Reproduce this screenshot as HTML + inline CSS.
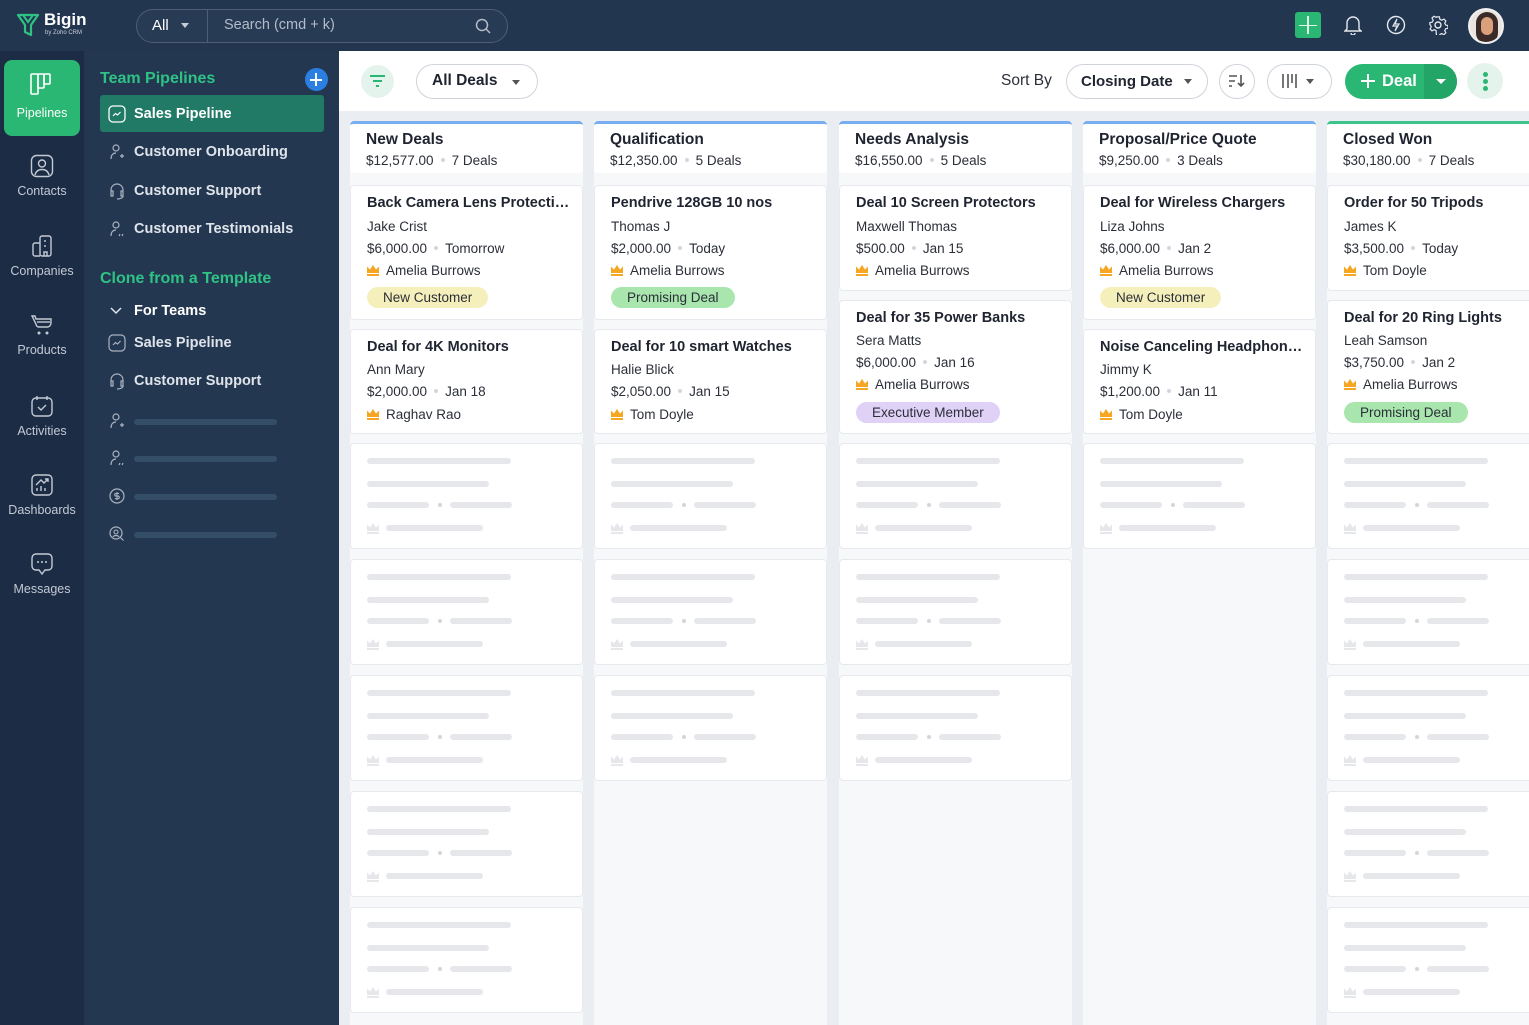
<!DOCTYPE html>
<html><head><meta charset="utf-8">
<style>
*{margin:0;padding:0;box-sizing:border-box}
body{width:1529px;height:1025px;overflow:hidden;font-family:"Liberation Sans",sans-serif;background:#eaedf1;position:relative}
.a{position:absolute}
.top{left:0;top:0;width:1529px;height:51px;background:#233650}
.rail{left:0;top:51px;width:84px;height:974px;background:#1c2c45}
.panel{left:84px;top:51px;width:255px;height:974px;background:#243751}
.ri{position:absolute;left:0;width:84px;text-align:center;color:#c3cad4;font-size:12.5px}
.ri svg{display:block;margin:0 auto 6px}
.pi{position:absolute;left:108px;color:#dfe4ea;font-size:14.5px;font-weight:bold;line-height:18px;white-space:nowrap}
.pi svg{position:absolute;left:0;top:0}
.pi span{position:absolute;left:26px;top:0}
.psk{position:absolute;left:134px;width:143px;height:6px;border-radius:3px;background:#344e68}
.tb{left:339px;top:51px;width:1190px;height:60px;background:#fff}
.pill{position:absolute;border:1px solid #cfd4db;border-radius:18px;background:#fff}
.col{position:absolute;top:121px;width:233px;height:904px;background:#f7f8fa}
.hdr{position:absolute;left:0;top:0;width:233px;height:52px;background:#fff;border-top:3px solid #78aef0;border-radius:4px}
.hdr b{position:absolute;left:16px;top:7px;font-size:15.5px;color:#1f2430}
.hdr i{position:absolute;left:16px;top:29px;font-style:normal;font-size:13.5px;color:#2b2f38;white-space:nowrap}
.dot{display:inline-block;width:4px;height:4px;border-radius:2px;background:#d3d7dd;margin:0 7px 3px}
.card{position:absolute;left:0;width:233px;background:#fff;border:1px solid #e6e9ed;border-radius:4px}
.card .t{position:absolute;left:16px;top:8px;width:205px;font-size:14.5px;font-weight:bold;color:#1f2430;white-space:nowrap;overflow:hidden;text-overflow:ellipsis;line-height:18px}
.card .l{position:absolute;left:16px;font-size:13.5px;color:#2b2f38;white-space:nowrap;line-height:18px}
.card .l svg{vertical-align:-1px;margin-right:7px}
.tag{position:absolute;left:16px;top:101px;height:21px;border-radius:11px;font-size:13.5px;line-height:21px;padding:0 16px;color:#2b2f38;white-space:nowrap}
.skc{position:absolute;width:233px;height:106px;background:#fff;border:1px solid #e6e9ed;border-radius:4px}
.skc .b1{position:absolute;left:16px;top:14px;width:144px;height:6px;border-radius:3px;background:#e5e7ea}
.skc .b2{position:absolute;left:16px;top:37px;width:122px;height:6px;border-radius:3px;background:#e5e7ea}
.skc .b3{position:absolute;left:16px;top:58px;width:62px;height:6px;border-radius:3px;background:#e5e7ea}
.skc .d{position:absolute;left:87px;top:59px;width:4px;height:4px;border-radius:2px;background:#d3d6da}
.skc .b4{position:absolute;left:99px;top:58px;width:62px;height:6px;border-radius:3px;background:#e5e7ea}
.skc .cr{position:absolute;left:16px;top:79px}
.skc .b5{position:absolute;left:35px;top:81px;width:97px;height:6px;border-radius:3px;background:#e5e7ea}
</style></head><body>

<div class="a top"></div>
<svg class="a" style="left:16px;top:12px" width="24" height="26" viewBox="0 0 24 26"><path d="M2 3h20l-7 10v10l-6-3v-7z" fill="none" stroke="#2ec384" stroke-width="2.2" stroke-linejoin="round"/><path d="M7 3l5 7 5-7" fill="none" stroke="#2ec384" stroke-width="2"/></svg>
<div class="a" style="left:44px;top:10px;color:#fff;font-weight:bold;font-size:17px">Bigin</div>
<div class="a" style="left:45px;top:30px;color:#c8ced8;font-size:6px">by Zoho CRM</div>
<div class="a" style="left:136px;top:9px;width:372px;height:34px;border:1px solid #4d5e75;border-radius:17px;background:#283b55"></div>
<div class="a" style="left:152px;top:17px;color:#fff;font-size:15px">All</div>
<div class="a" style="left:181px;top:23px;border-left:4px solid transparent;border-right:4px solid transparent;border-top:5px solid #c7cdd6"></div>
<div class="a" style="left:207px;top:10px;width:1px;height:32px;background:#4d5e75"></div>
<div class="a" style="left:224px;top:17px;color:#b3bcc8;font-size:14.5px">Search (cmd + k)</div>
<svg class="a" style="left:475px;top:18px" width="16" height="16" viewBox="0 0 16 16"><circle cx="7" cy="7" r="5.5" fill="none" stroke="#b3bcc8" stroke-width="1.5"/><path d="M11 11l4 4" stroke="#b3bcc8" stroke-width="1.5"/></svg>
<div class="a" style="left:1295px;top:12px;width:26px;height:26px;border-radius:3px;background:#2ab673"></div>
<div class="a" style="left:1307px;top:16px;width:1.5px;height:18px;background:#dff5ea"></div>
<div class="a" style="left:1299px;top:24.5px;width:18px;height:1.5px;background:#dff5ea"></div>
<svg class="a" style="left:1344px;top:15px" width="18" height="20" viewBox="0 0 18 20"><path d="M3 14V8a6 6 0 0 1 12 0v6l2 2H1z" fill="none" stroke="#e5e9ee" stroke-width="1.4"/><path d="M7 18a2 2 0 0 0 4 0" fill="none" stroke="#e5e9ee" stroke-width="1.4"/></svg>
<svg class="a" style="left:1386px;top:15px" width="20" height="20" viewBox="0 0 20 20"><circle cx="10" cy="10" r="8.5" fill="none" stroke="#e5e9ee" stroke-width="1.4"/><path d="M11 4l-4 7h4l-2 5 4-7H9z" fill="none" stroke="#e5e9ee" stroke-width="1.2"/></svg>
<svg class="a" style="left:1428px;top:15px" width="20" height="20" viewBox="0 0 20 20"><circle cx="10" cy="10" r="3" fill="none" stroke="#e5e9ee" stroke-width="1.4"/><path d="M8.5 1.5h3l.5 2.5 2 1 2.3-1.2 2 2-1.2 2.3 1 2 2.4.4v3l-2.4.5-1 2 1.2 2.2-2 2-2.3-1.2-2 1-.5 2.5h-3L8 16l-2-1-2.3 1.2-2-2L2.9 12 2 10l-.5-.5v-2L4 7l1-2L3.7 2.8l2-2L8 2z" fill="none" stroke="#e5e9ee" stroke-width="1.3" transform="scale(.95) translate(.5 .5)"/></svg>
<div class="a" style="left:1468px;top:8px;width:36px;height:36px;border-radius:18px;background:#e9e4df;border:2px solid #f0f0f0;overflow:hidden"><div style="position:absolute;left:6px;top:2px;width:22px;height:32px;border-radius:11px;background:#3a2b28"></div><div style="position:absolute;left:11px;top:7px;width:12px;height:18px;border-radius:6px;background:#d9a07b"></div></div>

<div class="a rail"></div>
<div class="a" style="left:4px;top:60px;width:76px;height:76px;border-radius:8px;background:#2ab673"></div>
<svg class="a" style="left:29px;top:72px" width="24" height="26" viewBox="0 0 24 26"><rect x="2" y="2" width="7" height="20" rx="1" fill="none" stroke="#fff" stroke-width="1.6"/><rect x="9" y="2" width="6" height="14" rx="1" fill="none" stroke="#fff" stroke-width="1.6"/><rect x="15" y="2" width="6" height="10" rx="1" fill="none" stroke="#fff" stroke-width="1.6"/></svg>
<div class="ri" style="top:106px;color:#fff">Pipelines</div>
<div class="ri" style="top:154px"><svg width="24" height="24" viewBox="0 0 24 24"><rect x="1.5" y="1.5" width="21" height="21" rx="5" fill="none" stroke="#c3cad4" stroke-width="1.4"/><circle cx="12" cy="9.5" r="3.5" fill="none" stroke="#c3cad4" stroke-width="1.4"/><path d="M5 21c1-4 4-5.5 7-5.5s6 1.5 7 5.5" fill="none" stroke="#c3cad4" stroke-width="1.4"/></svg>Contacts</div>
<div class="ri" style="top:234px"><svg width="24" height="24" viewBox="0 0 24 24"><rect x="10" y="2" width="11" height="20" rx="2" fill="none" stroke="#c3cad4" stroke-width="1.4"/><path d="M10 9H5a2 2 0 0 0-2 2v9a2 2 0 0 0 2 2h5M15 6v2M15 11v2M14 22v-4h3v4" fill="none" stroke="#c3cad4" stroke-width="1.4"/></svg>Companies</div>
<div class="ri" style="top:313px"><svg width="24" height="24" viewBox="0 0 24 24"><path d="M2 3h3l1 3h15v4a4 4 0 0 1-4 4H9a3 3 0 0 1-3-3z" fill="none" stroke="#c3cad4" stroke-width="1.4"/><path d="M7 9h13" stroke="#c3cad4" stroke-width="1.4"/><circle cx="9" cy="20" r="1.5" fill="#c3cad4"/><circle cx="17" cy="20" r="1.5" fill="#c3cad4"/></svg>Products</div>
<div class="ri" style="top:394px"><svg width="24" height="24" viewBox="0 0 24 24"><rect x="2" y="4" width="20" height="18" rx="4" fill="none" stroke="#c3cad4" stroke-width="1.4"/><path d="M7 2v4M17 2v4M8 13l3 3 5-5" fill="none" stroke="#c3cad4" stroke-width="1.4"/></svg>Activities</div>
<div class="ri" style="top:473px"><svg width="24" height="24" viewBox="0 0 24 24"><rect x="2" y="2" width="20" height="20" rx="4" fill="none" stroke="#c3cad4" stroke-width="1.4"/><path d="M7 18v-3M11 18v-5M15 18v-3M6 12l5-5 3 3 4-4M15 6h3v3" fill="none" stroke="#c3cad4" stroke-width="1.4"/></svg>Dashboards</div>
<div class="ri" style="top:552px"><svg width="24" height="24" viewBox="0 0 24 24"><path d="M6 2h12a4 4 0 0 1 4 4v8a4 4 0 0 1-4 4h-3l-3 4-3-4H6a4 4 0 0 1-4-4V6a4 4 0 0 1 4-4z" fill="none" stroke="#c3cad4" stroke-width="1.4"/><circle cx="8" cy="10" r="1" fill="#c3cad4"/><circle cx="12" cy="10" r="1" fill="#c3cad4"/><circle cx="16" cy="10" r="1" fill="#c3cad4"/></svg>Messages</div>

<div class="a panel"></div>
<div class="a" style="left:100px;top:70px;color:#2ec384;font-weight:bold;font-size:16px">Team Pipelines</div>
<div class="a" style="left:305px;top:68px;width:23px;height:23px;border-radius:12px;background:#2a7fe0"></div>
<div class="a" style="left:315px;top:73px;width:2px;height:13px;background:#fff"></div>
<div class="a" style="left:310px;top:78.5px;width:12px;height:2px;background:#fff"></div>
<div class="a" style="left:100px;top:95px;width:224px;height:37px;border-radius:3px;background:#217a66"></div>
<div class="pi" style="top:105px;color:#fff"><svg width="18" height="18" viewBox="0 0 18 18"><rect x="1" y="1" width="16" height="16" rx="4" fill="none" stroke="#fff" stroke-width="1.3"/><path d="M5 11l2.5-2.5 2 1.5 3-3" fill="none" stroke="#fff" stroke-width="1.2"/></svg><span>Sales Pipeline</span></div>
<div class="pi" style="top:143px"><svg width="18" height="18" viewBox="0 0 18 18"><circle cx="8" cy="5" r="3" fill="none" stroke="#aab3c0" stroke-width="1.2"/><path d="M3 16c0-4 2-6 5-6M12 13h4M14 11v4" fill="none" stroke="#aab3c0" stroke-width="1.2"/></svg><span>Customer Onboarding</span></div>
<div class="pi" style="top:182px"><svg width="18" height="18" viewBox="0 0 18 18"><path d="M3 10V8a6 6 0 0 1 12 0v2M3 9h2v5H3zM13 9h2v5h-2zM15 14c0 2-3 3-6 3" fill="none" stroke="#aab3c0" stroke-width="1.2"/></svg><span>Customer Support</span></div>
<div class="pi" style="top:220px"><svg width="18" height="18" viewBox="0 0 18 18"><circle cx="8" cy="5" r="3" fill="none" stroke="#aab3c0" stroke-width="1.2"/><path d="M3 16c0-4 2-6 5-6M12 14l-1 2M15 14l-1 2" fill="none" stroke="#aab3c0" stroke-width="1.2"/></svg><span>Customer Testimonials</span></div>
<div class="a" style="left:100px;top:270px;color:#2ec384;font-weight:bold;font-size:16px">Clone from a Template</div>
<div class="pi" style="top:302px;color:#fff"><svg width="18" height="18" viewBox="0 0 18 18"><path d="M3 6l5 5 5-5" fill="none" stroke="#dfe4ea" stroke-width="1.5"/></svg><span>For Teams</span></div>
<div class="pi" style="top:334px"><svg width="18" height="18" viewBox="0 0 18 18"><rect x="1" y="1" width="16" height="16" rx="4" fill="none" stroke="#aab3c0" stroke-width="1.2"/><path d="M5 11l2.5-2.5 2 1.5 3-3" fill="none" stroke="#aab3c0" stroke-width="1.2"/></svg><span>Sales Pipeline</span></div>
<div class="pi" style="top:372px"><svg width="18" height="18" viewBox="0 0 18 18"><path d="M3 10V8a6 6 0 0 1 12 0v2M3 9h2v5H3zM13 9h2v5h-2zM15 14c0 2-3 3-6 3" fill="none" stroke="#aab3c0" stroke-width="1.2"/></svg><span>Customer Support</span></div>
<div class="pi" style="top:412px"><svg width="18" height="18" viewBox="0 0 18 18"><circle cx="8" cy="5" r="3" fill="none" stroke="#aab3c0" stroke-width="1.2"/><path d="M3 16c0-4 2-6 5-6M12 13h4M14 11v4" fill="none" stroke="#aab3c0" stroke-width="1.2"/></svg></div>
<div class="pi" style="top:449px"><svg width="18" height="18" viewBox="0 0 18 18"><circle cx="8" cy="5" r="3" fill="none" stroke="#aab3c0" stroke-width="1.2"/><path d="M3 16c0-4 2-6 5-6M12 14l-1 2M15 14l-1 2" fill="none" stroke="#aab3c0" stroke-width="1.2"/></svg></div>
<div class="pi" style="top:487px"><svg width="18" height="18" viewBox="0 0 18 18"><circle cx="9" cy="9" r="7" fill="none" stroke="#aab3c0" stroke-width="1.2"/><path d="M11 6.5H8a1.3 1.3 0 0 0 0 2.6h2a1.3 1.3 0 0 1 0 2.6H7M9 5v8" fill="none" stroke="#aab3c0" stroke-width="1.1"/></svg></div>
<div class="pi" style="top:525px"><svg width="18" height="18" viewBox="0 0 18 18"><circle cx="8" cy="8" r="6" fill="none" stroke="#aab3c0" stroke-width="1.2"/><circle cx="8" cy="7" r="2" fill="none" stroke="#aab3c0" stroke-width="1.1"/><path d="M5 12c1-2 5-2 6 0M12.5 12.5l3 3" fill="none" stroke="#aab3c0" stroke-width="1.2"/></svg></div>
<div class="psk" style="top:419px"></div>
<div class="psk" style="top:456px"></div>
<div class="psk" style="top:494px"></div>
<div class="psk" style="top:532px"></div>

<div class="a tb"></div>
<div class="a" style="left:361px;top:65px;width:33px;height:33px;border-radius:17px;background:#e5f3ed"></div>
<div class="a" style="left:370px;top:75px;width:15px;height:2px;background:#2ab673"></div>
<div class="a" style="left:373px;top:80px;width:9px;height:2px;background:#2ab673"></div>
<div class="a" style="left:376px;top:85px;width:3px;height:2px;background:#2ab673"></div>
<div class="pill" style="left:416px;top:64px;width:122px;height:35px"></div>
<div class="a" style="left:432px;top:72px;font-size:15.5px;font-weight:bold;color:#1f2430">All Deals</div>
<div class="a" style="left:512px;top:80px;border-left:4.5px solid transparent;border-right:4.5px solid transparent;border-top:5px solid #555"></div>
<div class="a" style="left:1001px;top:72px;font-size:15.5px;color:#2b2f38">Sort By</div>
<div class="pill" style="left:1066px;top:64px;width:142px;height:35px"></div>
<div class="a" style="left:1081px;top:73px;font-size:15px;font-weight:bold;color:#1f2430">Closing Date</div>
<div class="a" style="left:1184px;top:79px;border-left:4.5px solid transparent;border-right:4.5px solid transparent;border-top:5px solid #555"></div>
<div class="pill" style="left:1219px;top:64px;width:36px;height:35px"></div>
<svg class="a" style="left:1227px;top:72px" width="20" height="18" viewBox="0 0 20 18"><path d="M2 4h8M2 9h6M2 14h3M14 3v11M11 11l3 3 3-3" fill="none" stroke="#555" stroke-width="1.6"/></svg>
<div class="pill" style="left:1267px;top:64px;width:65px;height:35px"></div>
<svg class="a" style="left:1281px;top:72px" width="18" height="18" viewBox="0 0 18 18"><path d="M2 2v14M7 2v14M11 2v9M15 2v14" stroke="#555" stroke-width="1.6"/></svg>
<div class="a" style="left:1306px;top:79px;border-left:4.5px solid transparent;border-right:4.5px solid transparent;border-top:5px solid #555"></div>
<div class="a" style="left:1345px;top:64px;width:112px;height:35px;border-radius:18px;background:#2ab673;overflow:hidden"><div style="position:absolute;left:79px;top:0;width:33px;height:35px;background:#22a566"></div></div>
<div class="a" style="left:1367px;top:74px;width:2px;height:14px;background:#fff"></div>
<div class="a" style="left:1361px;top:80px;width:14px;height:2px;background:#fff"></div>
<div class="a" style="left:1382px;top:72px;font-size:16.5px;font-weight:bold;color:#fff">Deal</div>
<div class="a" style="left:1436px;top:79px;border-left:5px solid transparent;border-right:5px solid transparent;border-top:5px solid #fff"></div>
<div class="a" style="left:1467px;top:63px;width:36px;height:36px;border-radius:18px;background:#e5f3ed"></div>
<div class="a" style="left:1483px;top:72px;width:5px;height:5px;border-radius:3px;background:#2ab673"></div>
<div class="a" style="left:1483px;top:79px;width:5px;height:5px;border-radius:3px;background:#2ab673"></div>
<div class="a" style="left:1483px;top:86px;width:5px;height:5px;border-radius:3px;background:#2ab673"></div>

<div class="col" style="left:350px">
 <div class="hdr"><b>New Deals</b><i>$12,577.00<span class="dot"></span>7 Deals</i></div>
 <div class="card" style="top:64px;height:135px"><div class="t">Back Camera Lens Protection Film</div><div class="l" style="top:32px">Jake Crist</div><div class="l" style="top:54px">$6,000.00<span class="dot"></span>Tomorrow</div><div class="l" style="top:76px"><svg width="12" height="11" viewBox="0 0 12 11"><path d="M0 1.5l3 3 3-4.5 3 4.5 3-3V8H0z" fill="#f5a623"/><rect y="9" width="12" height="2" fill="#f5a623"/></svg>Amelia Burrows</div><div class="tag" style="background:#f5f0bb">New Customer</div></div>
 <div class="card" style="top:208px;height:105px"><div class="t">Deal for 4K Monitors</div><div class="l" style="top:31px">Ann Mary</div><div class="l" style="top:53px">$2,000.00<span class="dot"></span>Jan 18</div><div class="l" style="top:76px"><svg width="12" height="11" viewBox="0 0 12 11"><path d="M0 1.5l3 3 3-4.5 3 4.5 3-3V8H0z" fill="#f5a623"/><rect y="9" width="12" height="2" fill="#f5a623"/></svg>Raghav Rao</div></div>
</div>
<div class="col" style="left:594px">
 <div class="hdr"><b>Qualification</b><i>$12,350.00<span class="dot"></span>5 Deals</i></div>
 <div class="card" style="top:64px;height:135px"><div class="t">Pendrive 128GB 10 nos</div><div class="l" style="top:32px">Thomas J</div><div class="l" style="top:54px">$2,000.00<span class="dot"></span>Today</div><div class="l" style="top:76px"><svg width="12" height="11" viewBox="0 0 12 11"><path d="M0 1.5l3 3 3-4.5 3 4.5 3-3V8H0z" fill="#f5a623"/><rect y="9" width="12" height="2" fill="#f5a623"/></svg>Amelia Burrows</div><div class="tag" style="background:#a8e6ae">Promising Deal</div></div>
 <div class="card" style="top:208px;height:105px"><div class="t">Deal for 10 smart Watches</div><div class="l" style="top:31px">Halie Blick</div><div class="l" style="top:53px">$2,050.00<span class="dot"></span>Jan 15</div><div class="l" style="top:76px"><svg width="12" height="11" viewBox="0 0 12 11"><path d="M0 1.5l3 3 3-4.5 3 4.5 3-3V8H0z" fill="#f5a623"/><rect y="9" width="12" height="2" fill="#f5a623"/></svg>Tom Doyle</div></div>
</div>
<div class="col" style="left:839px">
 <div class="hdr"><b>Needs Analysis</b><i>$16,550.00<span class="dot"></span>5 Deals</i></div>
 <div class="card" style="top:64px;height:106px"><div class="t">Deal 10 Screen Protectors</div><div class="l" style="top:32px">Maxwell Thomas</div><div class="l" style="top:54px">$500.00<span class="dot"></span>Jan 15</div><div class="l" style="top:76px"><svg width="12" height="11" viewBox="0 0 12 11"><path d="M0 1.5l3 3 3-4.5 3 4.5 3-3V8H0z" fill="#f5a623"/><rect y="9" width="12" height="2" fill="#f5a623"/></svg>Amelia Burrows</div></div>
 <div class="card" style="top:179px;height:134px"><div class="t">Deal for 35 Power Banks</div><div class="l" style="top:31px">Sera Matts</div><div class="l" style="top:53px">$6,000.00<span class="dot"></span>Jan 16</div><div class="l" style="top:75px"><svg width="12" height="11" viewBox="0 0 12 11"><path d="M0 1.5l3 3 3-4.5 3 4.5 3-3V8H0z" fill="#f5a623"/><rect y="9" width="12" height="2" fill="#f5a623"/></svg>Amelia Burrows</div><div class="tag" style="background:#e0d1f7">Executive Member</div></div>
</div>
<div class="col" style="left:1083px">
 <div class="hdr"><b>Proposal/Price Quote</b><i>$9,250.00<span class="dot"></span>3 Deals</i></div>
 <div class="card" style="top:64px;height:135px"><div class="t">Deal for Wireless Chargers</div><div class="l" style="top:32px">Liza Johns</div><div class="l" style="top:54px">$6,000.00<span class="dot"></span>Jan 2</div><div class="l" style="top:76px"><svg width="12" height="11" viewBox="0 0 12 11"><path d="M0 1.5l3 3 3-4.5 3 4.5 3-3V8H0z" fill="#f5a623"/><rect y="9" width="12" height="2" fill="#f5a623"/></svg>Amelia Burrows</div><div class="tag" style="background:#f5f0bb">New Customer</div></div>
 <div class="card" style="top:208px;height:105px"><div class="t">Noise Canceling Headphones Pro</div><div class="l" style="top:31px">Jimmy K</div><div class="l" style="top:53px">$1,200.00<span class="dot"></span>Jan 11</div><div class="l" style="top:76px"><svg width="12" height="11" viewBox="0 0 12 11"><path d="M0 1.5l3 3 3-4.5 3 4.5 3-3V8H0z" fill="#f5a623"/><rect y="9" width="12" height="2" fill="#f5a623"/></svg>Tom Doyle</div></div>
</div>
<div class="col" style="left:1327px">
 <div class="hdr" style="border-top-color:#3cc48c"><b>Closed Won</b><i>$30,180.00<span class="dot"></span>7 Deals</i></div>
 <div class="card" style="top:64px;height:106px"><div class="t">Order for 50 Tripods</div><div class="l" style="top:32px">James K</div><div class="l" style="top:54px">$3,500.00<span class="dot"></span>Today</div><div class="l" style="top:76px"><svg width="12" height="11" viewBox="0 0 12 11"><path d="M0 1.5l3 3 3-4.5 3 4.5 3-3V8H0z" fill="#f5a623"/><rect y="9" width="12" height="2" fill="#f5a623"/></svg>Tom Doyle</div></div>
 <div class="card" style="top:179px;height:134px"><div class="t">Deal for 20 Ring Lights</div><div class="l" style="top:31px">Leah Samson</div><div class="l" style="top:53px">$3,750.00<span class="dot"></span>Jan 2</div><div class="l" style="top:75px"><svg width="12" height="11" viewBox="0 0 12 11"><path d="M0 1.5l3 3 3-4.5 3 4.5 3-3V8H0z" fill="#f5a623"/><rect y="9" width="12" height="2" fill="#f5a623"/></svg>Amelia Burrows</div><div class="tag" style="background:#a8e6ae">Promising Deal</div></div>
</div>

<div class="skc" style="left:350px;top:443px"><i class="b1"></i><i class="b2"></i><i class="b3"></i><i class="d"></i><i class="b4"></i><svg class="cr" width="12" height="11" viewBox="0 0 12 11"><path d="M0 1.5l3 3 3-4.5 3 4.5 3-3V8H0z" fill="#e5e7ea"/><rect y="9" width="12" height="2" fill="#e5e7ea"/></svg><i class="b5"></i></div>
<div class="skc" style="left:350px;top:559px"><i class="b1"></i><i class="b2"></i><i class="b3"></i><i class="d"></i><i class="b4"></i><svg class="cr" width="12" height="11" viewBox="0 0 12 11"><path d="M0 1.5l3 3 3-4.5 3 4.5 3-3V8H0z" fill="#e5e7ea"/><rect y="9" width="12" height="2" fill="#e5e7ea"/></svg><i class="b5"></i></div>
<div class="skc" style="left:350px;top:675px"><i class="b1"></i><i class="b2"></i><i class="b3"></i><i class="d"></i><i class="b4"></i><svg class="cr" width="12" height="11" viewBox="0 0 12 11"><path d="M0 1.5l3 3 3-4.5 3 4.5 3-3V8H0z" fill="#e5e7ea"/><rect y="9" width="12" height="2" fill="#e5e7ea"/></svg><i class="b5"></i></div>
<div class="skc" style="left:350px;top:791px"><i class="b1"></i><i class="b2"></i><i class="b3"></i><i class="d"></i><i class="b4"></i><svg class="cr" width="12" height="11" viewBox="0 0 12 11"><path d="M0 1.5l3 3 3-4.5 3 4.5 3-3V8H0z" fill="#e5e7ea"/><rect y="9" width="12" height="2" fill="#e5e7ea"/></svg><i class="b5"></i></div>
<div class="skc" style="left:350px;top:907px"><i class="b1"></i><i class="b2"></i><i class="b3"></i><i class="d"></i><i class="b4"></i><svg class="cr" width="12" height="11" viewBox="0 0 12 11"><path d="M0 1.5l3 3 3-4.5 3 4.5 3-3V8H0z" fill="#e5e7ea"/><rect y="9" width="12" height="2" fill="#e5e7ea"/></svg><i class="b5"></i></div>

<div class="skc" style="left:594px;top:443px"><i class="b1"></i><i class="b2"></i><i class="b3"></i><i class="d"></i><i class="b4"></i><svg class="cr" width="12" height="11" viewBox="0 0 12 11"><path d="M0 1.5l3 3 3-4.5 3 4.5 3-3V8H0z" fill="#e5e7ea"/><rect y="9" width="12" height="2" fill="#e5e7ea"/></svg><i class="b5"></i></div>
<div class="skc" style="left:594px;top:559px"><i class="b1"></i><i class="b2"></i><i class="b3"></i><i class="d"></i><i class="b4"></i><svg class="cr" width="12" height="11" viewBox="0 0 12 11"><path d="M0 1.5l3 3 3-4.5 3 4.5 3-3V8H0z" fill="#e5e7ea"/><rect y="9" width="12" height="2" fill="#e5e7ea"/></svg><i class="b5"></i></div>
<div class="skc" style="left:594px;top:675px"><i class="b1"></i><i class="b2"></i><i class="b3"></i><i class="d"></i><i class="b4"></i><svg class="cr" width="12" height="11" viewBox="0 0 12 11"><path d="M0 1.5l3 3 3-4.5 3 4.5 3-3V8H0z" fill="#e5e7ea"/><rect y="9" width="12" height="2" fill="#e5e7ea"/></svg><i class="b5"></i></div>

<div class="skc" style="left:839px;top:443px"><i class="b1"></i><i class="b2"></i><i class="b3"></i><i class="d"></i><i class="b4"></i><svg class="cr" width="12" height="11" viewBox="0 0 12 11"><path d="M0 1.5l3 3 3-4.5 3 4.5 3-3V8H0z" fill="#e5e7ea"/><rect y="9" width="12" height="2" fill="#e5e7ea"/></svg><i class="b5"></i></div>
<div class="skc" style="left:839px;top:559px"><i class="b1"></i><i class="b2"></i><i class="b3"></i><i class="d"></i><i class="b4"></i><svg class="cr" width="12" height="11" viewBox="0 0 12 11"><path d="M0 1.5l3 3 3-4.5 3 4.5 3-3V8H0z" fill="#e5e7ea"/><rect y="9" width="12" height="2" fill="#e5e7ea"/></svg><i class="b5"></i></div>
<div class="skc" style="left:839px;top:675px"><i class="b1"></i><i class="b2"></i><i class="b3"></i><i class="d"></i><i class="b4"></i><svg class="cr" width="12" height="11" viewBox="0 0 12 11"><path d="M0 1.5l3 3 3-4.5 3 4.5 3-3V8H0z" fill="#e5e7ea"/><rect y="9" width="12" height="2" fill="#e5e7ea"/></svg><i class="b5"></i></div>

<div class="skc" style="left:1083px;top:443px"><i class="b1"></i><i class="b2"></i><i class="b3"></i><i class="d"></i><i class="b4"></i><svg class="cr" width="12" height="11" viewBox="0 0 12 11"><path d="M0 1.5l3 3 3-4.5 3 4.5 3-3V8H0z" fill="#e5e7ea"/><rect y="9" width="12" height="2" fill="#e5e7ea"/></svg><i class="b5"></i></div>

<div class="skc" style="left:1327px;top:443px"><i class="b1"></i><i class="b2"></i><i class="b3"></i><i class="d"></i><i class="b4"></i><svg class="cr" width="12" height="11" viewBox="0 0 12 11"><path d="M0 1.5l3 3 3-4.5 3 4.5 3-3V8H0z" fill="#e5e7ea"/><rect y="9" width="12" height="2" fill="#e5e7ea"/></svg><i class="b5"></i></div>
<div class="skc" style="left:1327px;top:559px"><i class="b1"></i><i class="b2"></i><i class="b3"></i><i class="d"></i><i class="b4"></i><svg class="cr" width="12" height="11" viewBox="0 0 12 11"><path d="M0 1.5l3 3 3-4.5 3 4.5 3-3V8H0z" fill="#e5e7ea"/><rect y="9" width="12" height="2" fill="#e5e7ea"/></svg><i class="b5"></i></div>
<div class="skc" style="left:1327px;top:675px"><i class="b1"></i><i class="b2"></i><i class="b3"></i><i class="d"></i><i class="b4"></i><svg class="cr" width="12" height="11" viewBox="0 0 12 11"><path d="M0 1.5l3 3 3-4.5 3 4.5 3-3V8H0z" fill="#e5e7ea"/><rect y="9" width="12" height="2" fill="#e5e7ea"/></svg><i class="b5"></i></div>
<div class="skc" style="left:1327px;top:791px"><i class="b1"></i><i class="b2"></i><i class="b3"></i><i class="d"></i><i class="b4"></i><svg class="cr" width="12" height="11" viewBox="0 0 12 11"><path d="M0 1.5l3 3 3-4.5 3 4.5 3-3V8H0z" fill="#e5e7ea"/><rect y="9" width="12" height="2" fill="#e5e7ea"/></svg><i class="b5"></i></div>
<div class="skc" style="left:1327px;top:907px"><i class="b1"></i><i class="b2"></i><i class="b3"></i><i class="d"></i><i class="b4"></i><svg class="cr" width="12" height="11" viewBox="0 0 12 11"><path d="M0 1.5l3 3 3-4.5 3 4.5 3-3V8H0z" fill="#e5e7ea"/><rect y="9" width="12" height="2" fill="#e5e7ea"/></svg><i class="b5"></i></div>

</body></html>
